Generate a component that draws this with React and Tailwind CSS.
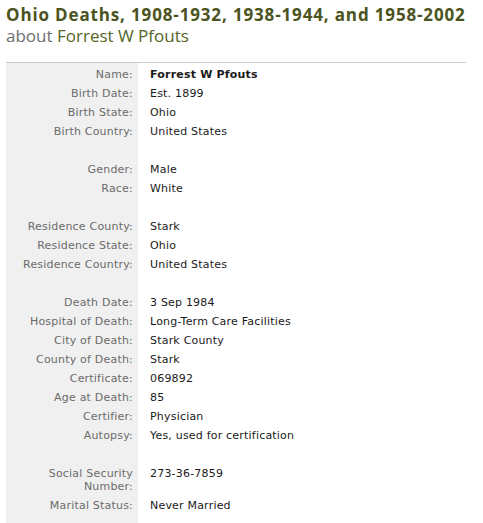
const rows = [
  ["Name:", "Forrest W Pfouts", true],
  ["Birth Date:", "Est. 1899"],
  ["Birth State:", "Ohio"],
  ["Birth Country:", "United States"],
  null,
  ["Gender:", "Male"],
  ["Race:", "White"],
  null,
  ["Residence County:", "Stark"],
  ["Residence State:", "Ohio"],
  ["Residence Country:", "United States"],
  null,
  ["Death Date:", "3 Sep 1984"],
  ["Hospital of Death:", "Long-Term Care Facilities"],
  ["City of Death:", "Stark County"],
  ["County of Death:", "Stark"],
  ["Certificate:", "069892"],
  ["Age at Death:", "85"],
  ["Certifier:", "Physician"],
  ["Autopsy:", "Yes, used for certification"],
  null,
  ["Social Security Number:", "273-36-7859"],
  ["Marital Status:", "Never Married"],
];

export default function App() {
  return (
    <div className="bg-white min-h-screen px-[6px] pt-[4px]">
      <h1 className="font-['Open_Sans',sans-serif] text-[17px] leading-[21px] font-bold tracking-[0.85px] text-[#4b5320]">
        Ohio Deaths, 1908-1932, 1938-1944, and 1958-2002
      </h1>
      <h2 className="font-['Open_Sans',sans-serif] text-[17px] leading-[21px] text-[#6e6e6e]">
        about <span className="text-[#55661f]">Forrest W Pfouts</span>
      </h2>

      <div className="mt-[16px] w-[460px] border-t border-[#cccccc] font-['DejaVu_Sans',Verdana,sans-serif] text-[11px] leading-[13px] tracking-[0.2px]">
        {rows.map((r, i) =>
          r ? (
            <div key={i} className="flex">
              <div className="w-[132px] shrink-0 bg-[#f0f0f0] pr-[5px] pt-[5px] pb-[1px] text-right text-[#6b6b6b]">
                {r[0] === "Social Security Number:" ? (
                  <>
                    Social Security
                    <br />
                    Number:
                  </>
                ) : (
                  r[0]
                )}
              </div>
              <div className={"pl-[12px] pt-[5px] pb-[1px] text-[#1a1a1a] " + (r[2] ? "font-bold" : "")}>{r[1]}</div>
            </div>
          ) : (
            <div key={i} className="flex h-[19px]">
              <div className="w-[132px] shrink-0 bg-[#f0f0f0]" />
            </div>
          )
        )}
        <div className="flex h-[20px]">
          <div className="w-[132px] shrink-0 bg-[#f0f0f0]" />
        </div>
      </div>
    </div>
  );
}
